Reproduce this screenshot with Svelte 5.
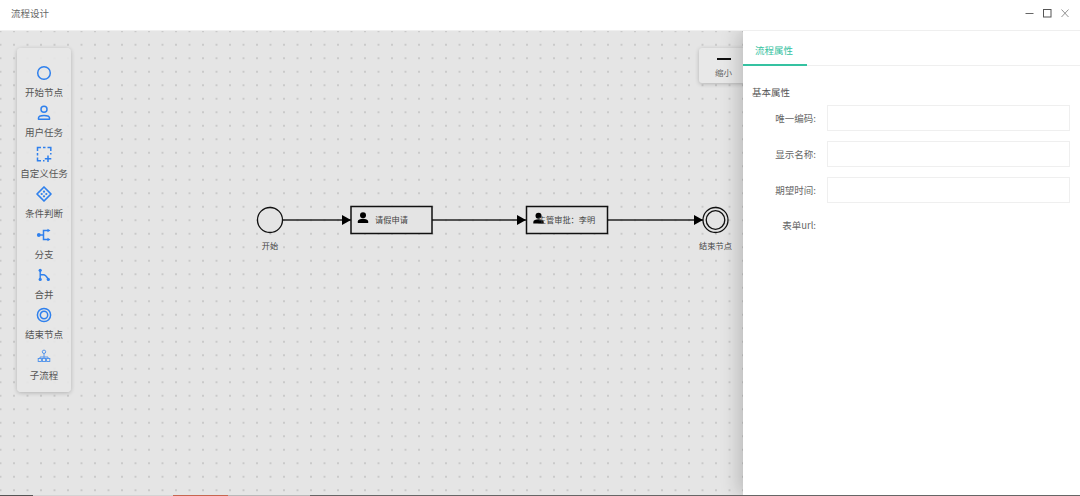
<script>
  const tools = [
    { label: '开始节点', icon: 'start' },
    { label: '用户任务', icon: 'user' },
    { label: '自定义任务', icon: 'custom' },
    { label: '条件判断', icon: 'gateway' },
    { label: '分支', icon: 'fork' },
    { label: '合并', icon: 'join' },
    { label: '结束节点', icon: 'end' },
    { label: '子流程', icon: 'sub' }
  ];
  const fields = ['唯一编码:', '显示名称:', '期望时间:'];
</script>

{#snippet person(x, y)}
  <g transform="translate({x} {y})" fill="#000">
    <circle cx="5.500" cy="3.300" r="3" />
    <path d="M0.300 11v-1.500c0-1.800 2.400-2.800 5.200-2.800s5.200 1 5.200 2.800V11z" />
  </g>
{/snippet}

<div class="window">
  <header class="titlebar">
    <span class="title">流程设计</span>
    <div class="controls">
      <svg width="12" height="12" viewBox="0 0 12 12"><path d="M0.500 6.500h8" stroke="#666" stroke-width="1" /></svg>
      <svg width="12" height="12" viewBox="0 0 12 12"><rect x="1.500" y="2.500" width="7.500" height="7.500" fill="none" stroke="#555" stroke-width="1" /></svg>
      <svg width="12" height="12" viewBox="0 0 12 12"><path d="M2.500 2.500l7 7.500M9.500 2.500l-7 7.500" stroke="#777" stroke-width="0.800" /></svg>
    </div>
  </header>

  <div class="body">
    <main class="canvas">
      <aside class="palette">
        {#each tools as tool}
          <div class="tool">
            <svg class="tool-icon" width="18" height="18" viewBox="0 0 18 18" fill="none" stroke="#2f80ed" stroke-width="1.500">
              {#if tool.icon === 'start'}
                <circle cx="9" cy="9" r="6.300" />
              {:else if tool.icon === 'user'}
                <circle cx="9" cy="5.300" r="3" />
                <path d="M3.500 15.300v-1.300c0-1.500 2.400-2.600 5.500-2.600s5.500 1.100 5.500 2.600v1.300z" stroke-linejoin="round" />
              {:else if tool.icon === 'custom'}
                <path d="M2.500 6V2.500H6M8 2.500h2.500M12.500 2.500h3.300V6M15.800 8v1.500M2.500 8v2.500M2.500 12.500v3.300H6M8 15.800h1.500" />
                <path d="M13 10.500v6.500M9.800 13.800h6.500" />
              {:else if tool.icon === 'gateway'}
                <path d="M9 2L16 9L9 16L2 9z" stroke-width="1.700" stroke-linejoin="round" />
                <circle cx="9" cy="6.700" r="1.100" fill="#2f80ed" stroke="none" />
                <circle cx="9" cy="11.300" r="1.100" fill="#2f80ed" stroke="none" />
                <circle cx="6.700" cy="9" r="1.100" fill="#2f80ed" stroke="none" />
                <circle cx="11.300" cy="9" r="1.100" fill="#2f80ed" stroke="none" />
              {:else if tool.icon === 'fork'}
                <circle cx="3.800" cy="9" r="1.900" fill="#2f80ed" stroke="none" />
                <path d="M4 9h4.500M13 4.500H8.500v9H13" />
                <path d="M12.500 2.700l3 1.800-3 1.800zM12.500 11.700l3 1.800-3 1.800z" fill="#2f80ed" stroke="none" />
              {:else if tool.icon === 'join'}
                <circle cx="5.200" cy="4.300" r="1.600" fill="#2f80ed" stroke="none" />
                <circle cx="5.200" cy="13.400" r="1.600" fill="#2f80ed" stroke="none" />
                <circle cx="13.300" cy="13.400" r="1.600" fill="#2f80ed" stroke="none" />
                <path d="M5.200 4.500v9M5.200 8.800h3.300c1.700 0 3 1.400 4.800 4.600" stroke-width="1.400" />
              {:else if tool.icon === 'end'}
                <circle cx="9" cy="9" r="6.600" />
                <circle cx="9" cy="9" r="3.700" />
              {:else}
                <g stroke-width="0.900" opacity="0.85">
                  <circle cx="9" cy="4.800" r="1.700" />
                  <path d="M9 6.500v3.500M5 11.500V10h8v1.500M9 10v1.500" />
                  <rect x="3.200" y="11.500" width="3.200" height="3" />
                  <rect x="7.400" y="11.500" width="3.200" height="3" />
                  <rect x="11.600" y="11.500" width="3.200" height="3" />
                </g>
              {/if}
            </svg>
            <span class="tool-label">{tool.label}</span>
          </div>
        {/each}
      </aside>

      <div class="zoom-card">
        <span class="zoom-bar"></span>
        <span class="zoom-label">缩小</span>
      </div>

      <svg class="diagram" width="743" height="465" viewBox="0 0 743 465">
        <defs>
          <marker id="arrow" markerUnits="userSpaceOnUse" markerWidth="9" markerHeight="10" refX="9" refY="5" orient="auto">
            <path d="M0 0L9 5L0 10z" fill="#000" />
          </marker>
        </defs>
        <path d="M283 189H351" stroke="#222" stroke-width="1.500" marker-end="url(#arrow)" />
        <path d="M432 189H526" stroke="#222" stroke-width="1.500" marker-end="url(#arrow)" />
        <path d="M608 189H703" stroke="#222" stroke-width="1.500" marker-end="url(#arrow)" />
        <circle cx="270" cy="189" r="12.500" fill="#e4e4e4" stroke="#111" stroke-width="1.300" />
        <rect x="351" y="175.500" width="81" height="27" fill="#e4e4e4" stroke="#111" stroke-width="1.500" />
        {@render person(357.500, 181)}
        <rect x="526.500" y="175.500" width="81" height="27" fill="#e4e4e4" stroke="#111" stroke-width="1.500" />
        {@render person(533, 181.500)}
        <circle cx="715.500" cy="189" r="12.500" fill="#e4e4e4" stroke="#111" stroke-width="1.300" />
        <circle cx="715.500" cy="189" r="9.300" fill="#e4e4e4" stroke="#111" stroke-width="1.300" />
      </svg>
      <span class="node-text" style="left:270px;top:208px">开始</span>
      <span class="node-text" style="left:391.500px;top:182px">请假申请</span>
      <span class="node-text" style="left:566.500px;top:182px">主管审批：李明</span>
      <span class="node-text" style="left:715.500px;top:208px">结束节点</span>
    </main>

    <section class="panel">
      <nav class="tabs">
        <span class="tab">流程属性</span>
      </nav>
      <div class="form">
        <h4>基本属性</h4>
        {#each fields as field}
          <div class="row">
            <span class="field-label">{field}</span>
            <div class="input"></div>
          </div>
        {/each}
        <div class="row">
          <span class="field-label last">表单url:</span>
        </div>
      </div>
    </section>
  </div>

  <div class="strip">
    <span style="width:33px;background:#555"></span>
    <span style="width:140px;background:#d4d4d4"></span>
    <span style="width:55px;background:#c8654f"></span>
    <span style="width:82px;background:#b8b8b8"></span>
    <span style="flex:1;background:#666"></span>
  </div>
</div>

<style>
  :global(body) {
    margin: 0;
    background: #fff;
  }
  * {
    box-sizing: border-box;
  }
  .window {
    width: 1080px;
    height: 496px;
    display: flex;
    flex-direction: column;
    overflow: hidden;
    font-family: "Noto Sans CJK SC", "Noto Sans", sans-serif;
    color: #555;
  }
  .titlebar {
    height: 31px;
    flex: none;
    display: flex;
    align-items: center;
    justify-content: space-between;
    padding: 0 9px 5px 11px;
    border-bottom: 1px solid #efefef;
  }
  .title {
    font-size: 9.500px;
    color: #666;
  }
  .controls {
    display: flex;
    gap: 5px;
  }
  .body {
    flex: 1;
    display: flex;
    min-height: 0;
    overflow: hidden;
  }
  .strip {
    height: 1px;
    flex: none;
    display: flex;
  }
  .canvas {
    position: relative;
    flex: 1;
    background-color: #e5e5e5;
    background-image: radial-gradient(circle, #bcbcbc 0.55px, transparent 0.95px);
    background-size: 13.500px 13.500px;
    background-position: 7.250px 7px;
  }
  .palette {
    position: absolute;
    left: 17px;
    top: 17px;
    width: 54px;
    height: 344px;
    padding-top: 16px;
    background: rgba(231, 231, 231, 0.9);
    border-radius: 4px;
    box-shadow: 0 1px 4px rgba(0, 0, 0, 0.22);
    display: flex;
    flex-direction: column;
    align-items: center;
  }
  .tool {
    height: 40.400px;
    flex: none;
    display: flex;
    flex-direction: column;
    align-items: center;
  }
  .tool-icon {
    display: block;
    margin-bottom: 3px;
  }
  .tool-label {
    font-size: 9.500px;
    line-height: 14px;
    white-space: nowrap;
    color: #555;
  }
  .zoom-card {
    position: absolute;
    left: 699px;
    top: 17px;
    width: 49px;
    height: 35px;
    border-radius: 3px;
    background: #e8e8e8;
    box-shadow: 0 1px 4px rgba(0, 0, 0, 0.22);
    display: flex;
    flex-direction: column;
    align-items: center;
    padding-top: 10px;
  }
  .zoom-bar {
    width: 14px;
    height: 2px;
    background: #111;
  }
  .zoom-label {
    margin-top: 6px;
    font-size: 8.500px;
    line-height: 12px;
    color: #666;
  }
  .diagram {
    position: absolute;
    left: 0;
    top: 0;
  }
  .node-text {
    position: absolute;
    transform: translateX(-50%);
    font-size: 8.200px;
    line-height: 12px;
    white-space: nowrap;
    color: #444;
  }
  .panel {
    position: relative;
    width: 337px;
    flex: none;
    background: #fff;
    box-shadow: -4px 0 18px rgba(0, 0, 0, 0.2);
  }
  .tabs {
    height: 35px;
    border-bottom: 1px solid #efefef;
  }
  .tab {
    display: block;
    width: 64px;
    height: 35px;
    padding: 12px 0 0 12px;
    font-size: 9.500px;
    line-height: 14px;
    color: #35c2a1;
    border-bottom: 2px solid #35c2a1;
  }
  .form {
    padding: 19px 10px 0 9px;
  }
  h4 {
    margin: 0 0 6px;
    font-size: 9.500px;
    line-height: 14px;
    font-weight: 400;
    color: #555;
  }
  .row {
    height: 36px;
    display: flex;
    align-items: flex-start;
    gap: 11px;
  }
  .field-label {
    width: 64px;
    text-align: right;
    padding-top: 6px;
    font-size: 9.500px;
    line-height: 14px;
    color: #666;
  }
  .field-label.last {
    padding-top: 5px;
  }
  .input {
    width: 243px;
    height: 26px;
    border: 1px solid #efefef;
    background: #fff;
  }
</style>
